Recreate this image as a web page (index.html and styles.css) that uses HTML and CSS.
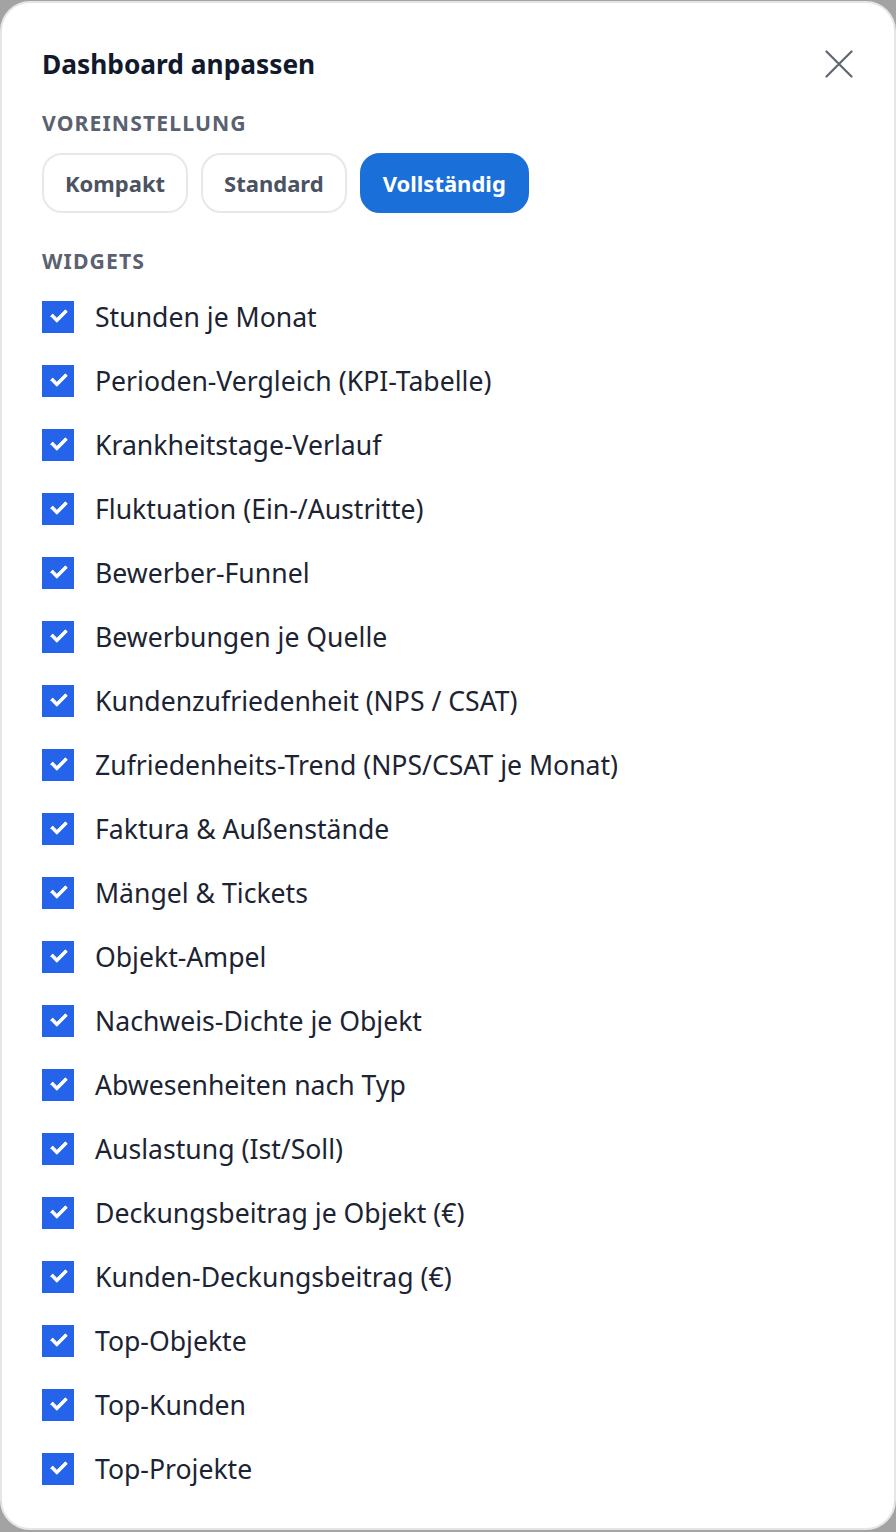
FILE: index.html
```html
<!DOCTYPE html>
<html lang="de">
<head>
<meta charset="utf-8">
<title>Dashboard anpassen</title>
<link rel="stylesheet" href="styles.css">
</head>
<body>
<div class="modal">
  <div class="header">
    <h2 class="title">Dashboard anpassen</h2>
    <button class="close" aria-label="Schließen">
      <svg width="28" height="28" viewBox="0 0 28 28"><path d="M1.5 1.5 L26.5 26.5 M26.5 1.5 L1.5 26.5" stroke="#5f6673" stroke-width="2.2" stroke-linecap="round" fill="none"/></svg>
    </button>
  </div>
  <div class="section-label">VOREINSTELLUNG</div>
  <div class="presets">
    <button class="preset">Kompakt</button>
    <button class="preset">Standard</button>
    <button class="preset active">Vollständig</button>
  </div>
  <div class="section-label widgets-label">WIDGETS</div>
  <ul class="list">
    <li class="item"><span class="cb"></span>Stunden je Monat</li>
    <li class="item"><span class="cb"></span>Perioden-Vergleich (KPI-Tabelle)</li>
    <li class="item"><span class="cb"></span>Krankheitstage-Verlauf</li>
    <li class="item"><span class="cb"></span>Fluktuation (Ein-/Austritte)</li>
    <li class="item"><span class="cb"></span>Bewerber-Funnel</li>
    <li class="item"><span class="cb"></span>Bewerbungen je Quelle</li>
    <li class="item"><span class="cb"></span>Kundenzufriedenheit (NPS / CSAT)</li>
    <li class="item"><span class="cb"></span>Zufriedenheits-Trend (NPS/CSAT je Monat)</li>
    <li class="item"><span class="cb"></span>Faktura &amp; Außenstände</li>
    <li class="item"><span class="cb"></span>Mängel &amp; Tickets</li>
    <li class="item"><span class="cb"></span>Objekt-Ampel</li>
    <li class="item"><span class="cb"></span>Nachweis-Dichte je Objekt</li>
    <li class="item"><span class="cb"></span>Abwesenheiten nach Typ</li>
    <li class="item"><span class="cb"></span>Auslastung (Ist/Soll)</li>
    <li class="item"><span class="cb"></span>Deckungsbeitrag je Objekt (€)</li>
    <li class="item"><span class="cb"></span>Kunden-Deckungsbeitrag (€)</li>
    <li class="item"><span class="cb"></span>Top-Objekte</li>
    <li class="item"><span class="cb"></span>Top-Kunden</li>
    <li class="item"><span class="cb"></span>Top-Projekte</li>
  </ul>
</div>
</body>
</html>
```
FILE: styles.css
```css
html, body {
  margin: 0;
  padding: 0;
  background: #a3a3a3;
}
body {
  padding-top: 1px;
  font-family: "Noto Sans", "Open Sans", sans-serif;
}
.modal {
  box-sizing: border-box;
  width: 896px;
  height: 1529px;
  background: #ffffff;
  border: 2px solid #e3e5e9;
  border-radius: 30px;
  padding: 38px 40px 0 40px;
}
.header {
  display: flex;
  justify-content: space-between;
  align-items: center;
}
.title {
  margin: 0;
  font-size: 26.3px;
  font-weight: 700;
  color: #111a2c;
  line-height: 46px;
}
.close {
  border: 0;
  background: transparent;
  padding: 0;
  margin-right: 1px;
  width: 28px;
  height: 28px;
  display: flex;
}
.section-label {
  margin-top: 22px;
  font-size: 21.2px;
  font-weight: 700;
  letter-spacing: 1.1px;
  color: #5a6170;
  line-height: 28px;
}
.presets {
  display: flex;
  gap: 13px;
  margin-top: 16px;
}
.preset {
  box-sizing: border-box;
  height: 60px;
  padding: 0 21px;
  border: 2px solid #e6e8ec;
  border-radius: 20px;
  background: #ffffff;
  font-family: inherit;
  font-size: 22px;
  font-weight: 700;
  color: #4b5262;
}
.preset.active {
  background: #1b6fd8;
  border-color: #1b6fd8;
  color: #ffffff;
}
.widgets-label {
  margin-top: 34px;
}
.list {
  list-style: none;
  margin: 10px 0 0 0;
  padding: 0;
}
.item {
  display: flex;
  align-items: center;
  height: 64px;
  font-size: 26.6px;
  color: #1c2433;
}
.cb {
  position: relative;
  width: 32px;
  height: 32px;
  background: #2563eb;
  margin-right: 21px;
  flex: none;
}
.cb::after {
  content: "";
  position: absolute;
  left: 9px;
  top: 8px;
  width: 12px;
  height: 6px;
  border-left: 4px solid #fff;
  border-bottom: 4px solid #fff;
  border-radius: 1px;
  transform: rotate(-45deg);
}
```
